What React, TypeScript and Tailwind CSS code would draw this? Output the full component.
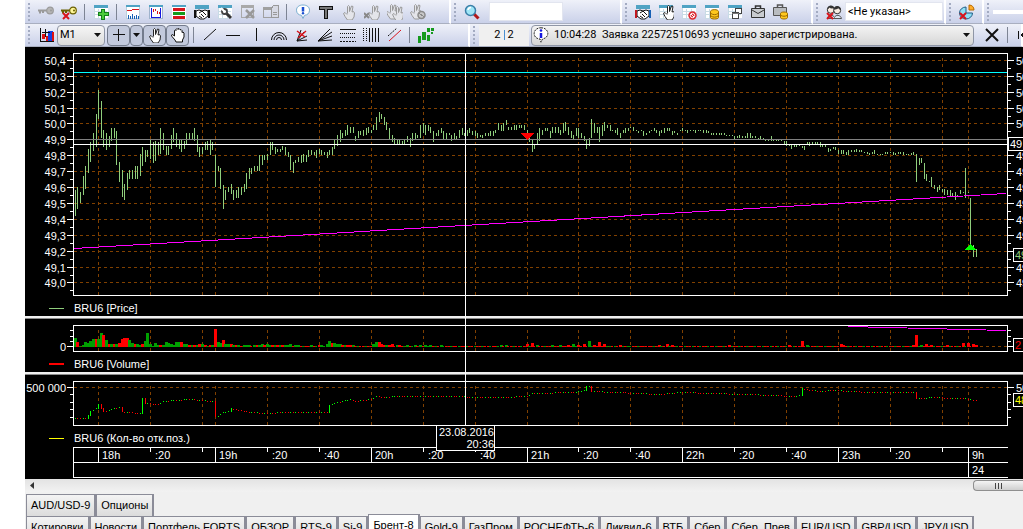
import React, { useState } from 'react';
import clsx from 'clsx';

// One entry per minute: high, low (in plot pixels)
const PRICE_BARS: number[] = [
  137, 163, 134, 156, 139, 150, 123, 142, 113, 136, 96, 120, 89, 109, 80, 98, 61, 94, 37, 66,
  48, 85, 77, 94, 80, 97, 83, 94, 75, 88, 75, 85, 78, 112, 109, 129, 117, 144, 131, 147,
  120, 137, 117, 126, 117, 126, 113, 126, 113, 126, 101, 123, 94, 113, 97, 109, 97, 104, 86, 106,
  89, 110, 88, 108, 89, 102, 75, 101, 80, 97, 93, 102, 93, 102, 82, 96, 75, 89, 80, 94,
  87, 96, 87, 99, 88, 96, 80, 92, 80, 86, 80, 86, 75, 88, 82, 99, 94, 104, 94, 101,
  89, 97, 88, 97, 87, 102, 89, 97, 102, 134, 113, 118, 115, 136, 132, 156, 137, 147, 134, 139,
  131, 141, 137, 147, 137, 145, 134, 145, 134, 142, 131, 139, 120, 136, 115, 126, 115, 121, 113, 118,
  113, 118, 102, 118, 102, 112, 102, 107, 101, 107, 89, 102, 89, 97, 94, 101, 96, 99, 96, 99,
  93, 97, 94, 102, 99, 104, 102, 117, 109, 120, 107, 110, 104, 109, 102, 110, 101, 109, 102, 109,
  97, 104, 97, 102, 99, 102, 97, 105, 96, 101, 97, 102, 99, 102, 99, 105, 97, 102, 94, 102,
  86, 96, 82, 93, 77, 89, 80, 85, 77, 83, 72, 82, 74, 80, 74, 80, 83, 88, 78, 85,
  78, 82, 77, 83, 75, 82, 74, 80, 77, 80, 72, 77, 64, 77, 59, 69, 61, 66, 64, 72,
  69, 77, 75, 86, 82, 89, 85, 91, 87, 91, 87, 91, 88, 91, 87, 91, 83, 89, 85, 94,
  80, 88, 80, 86, 82, 85, 72, 85, 70, 80, 72, 82, 72, 78, 74, 80, 78, 89, 80, 83,
  77, 83, 75, 80, 78, 86, 80, 86, 80, 82, 82, 88, 80, 86, 83, 86, 77, 85, 75, 82,
  80, 83, 77, 83, 75, 80, 78, 82, 78, 83, 80, 85, 82, 84, 82, 85, 80, 83, 80, 83,
  78, 83, 78, 83, 77, 80, 70, 77, 72, 78, 70, 78, 67, 72, 74, 77, 74, 77, 72, 77,
  72, 77, 72, 75, 72, 75, 72, 77, 77, 87, 82, 89, 86, 99, 91, 96, 80, 92, 75, 88,
  77, 82, 75, 78, 75, 78, 78, 85, 74, 80, 74, 80, 74, 80, 77, 82, 70, 80, 69, 78,
  74, 82, 78, 85, 82, 86, 75, 83, 75, 85, 80, 85, 83, 88, 87, 96, 85, 93, 66, 85,
  70, 80, 74, 80, 74, 89, 72, 83, 69, 78, 72, 75, 72, 78, 77, 78, 77, 80, 75, 82,
  80, 85, 77, 80, 75, 80, 75, 78, 74, 75, 74, 78, 77, 78, 78, 80, 77, 78, 78, 83,
  80, 82, 78, 80, 77, 78, 75, 78, 77, 80, 78, 83, 77, 80, 75, 80, 75, 78, 75, 78,
  78, 82, 78, 80, 80, 82, 77, 78, 75, 78, 77, 78, 77, 80, 77, 78, 77, 78, 77, 80,
  77, 78, 77, 78, 77, 80, 77, 80, 78, 80, 80, 82, 80, 82, 80, 82, 80, 82, 80, 82,
  80, 82, 82, 83, 82, 83, 82, 83, 83, 86, 83, 85, 82, 85, 83, 85, 83, 85, 80, 85,
  80, 85, 83, 85, 83, 85, 85, 86, 83, 86, 85, 86, 86, 88, 86, 88, 83, 88, 86, 88,
  86, 88, 86, 88, 87, 88, 88, 91, 88, 93, 91, 93, 92, 96, 92, 94, 92, 94, 92, 93,
  93, 95, 93, 97, 89, 92, 89, 93, 89, 91, 89, 91, 89, 91, 89, 94, 92, 94, 92, 94,
  95, 99, 96, 98, 94, 96, 94, 97, 97, 101, 97, 101, 97, 101, 99, 102, 97, 102, 97, 99,
  97, 99, 96, 99, 97, 99, 97, 99, 99, 100, 99, 101, 100, 102, 99, 101, 97, 101, 101, 102,
  101, 102, 101, 102, 99, 101, 99, 101, 99, 100, 99, 102, 100, 102, 99, 101, 99, 101, 99, 102,
  101, 102, 101, 102, 100, 102, 99, 102, 101, 129, 105, 112, 105, 110, 110, 126, 121, 128, 128, 129,
  124, 134, 132, 136, 134, 139, 132, 137, 136, 139, 136, 142, 137, 142, 137, 143, 140, 144, 139, 147,
  142, 144, 137, 141, 139, 140, 115, 145, 139, 140, 145, 192, 192, 204, 196, 204,
];

// Volume: positive is a rising minute, negative a falling one
const VOLUME_OPEN: number[] = [
  9, -5, 1, 2, 5, 4, 6, 8, -8, 8, 14, -12, 7, -3, 3, -3, 3, -4, -8, -9,
  -9, 7, 4, -3, 3, 2, -3, 6, 14, 3, 1, 4, 2, -2, 2, 5, 4, 3, 2, 5,
  5, -5, 3, 3, -2, 2, -2, 2, -3, 3, -2, 1, -2, 2, -18, 5, 4, -7, 3, 3,
  -3, 2, -2, 2, -1, 2, 2, 2, -1, 2, -2, 2, 3, -2, 3, 2, -2, 2, -2, 2,
  -2, 2, 2, 3, -1, 2, 2, -1, 1, -1, -1, 2, -1, 1, -2, 2, 1, 3, 6, -4,
  4, 3, 3, -2, 2, -2, -2, 2,
];
const VOLUME_PEAKS: Record<number, number> = {
  115: 3, 116: 5, 117: -5, 118: -3, 119: -2, 120: 2, 121: -2, 122: -3, 124: 2, 125: -2, 128: 2, 131: 2, 133: 2,
  135: 2, 137: 2, 141: 2, 164: 2, 166: 2, 170: -1, 174: -3, 176: -4, 178: 2, 181: 1, 184: 2, 187: 2, 190: -2,
  192: 3, 194: -2, 196: -3, 198: 6, 200: -2, 202: -5, 204: -3, 206: 1, 210: -2, 213: 1, 220: -1, 225: -2, 228: -3,
  230: -2, 252: -2, 267: -1, 275: -2, 280: -6, 282: 2, 295: -3, 296: -2, 323: -2, 324: -12, 326: 2, 328: -3,
  330: -2, 333: -1, 336: -2, 339: -1, 342: -4, 344: -4, 346: -3, 347: -2,
};

// Open interest key points: minute, level
const OPEN_INTEREST: [number, number][] = [
  [0, 37], [4, 37], [5, 34], [6, 30], [8, 27], [9, 23], [10, 27], [11, 30], [13, 29], [15, 27], [17, 26],
  [18, 30], [20, 31], [25, 32], [26, 17], [27, 22], [32, 23], [34, 20], [38, 19], [44, 18], [53, 20],
  [54, 35], [55, 35], [57, 31], [59, 30], [60, 27], [63, 29], [68, 31], [74, 32], [80, 31], [97, 31],
  [98, 24], [101, 21], [103, 20], [106, 18], [108, 20], [114, 18], [116, 15], [119, 16], [124, 15],
  [138, 15], [164, 16], [174, 15], [176, 12], [192, 11], [196, 9], [197, 5], [198, 5], [199, 10], [209, 11],
  [225, 13], [234, 11], [246, 12], [269, 14], [277, 15], [279, 14], [280, 7], [281, 8], [287, 10], [292, 9],
  [306, 11], [323, 11], [324, 17], [325, 17], [332, 16], [337, 17], [343, 17], [346, 19], [347, 19],
];

const PLOT_WIDTH = 935;
const MINUTE = 2.596;
const xOf = (minute: number) => Math.floor(2.3 + minute * MINUTE);

const TIME_CELLS = [
  { width: 25, label: '', hour: true },
  { width: 52, label: '18h', hour: true },
  { width: 52, label: ':20', hour: false },
  { width: 13, label: '', hour: false },
  { width: 52, label: '19h', hour: true },
  { width: 52, label: ':20', hour: false },
  { width: 52, label: ':40', hour: false },
  { width: 52, label: '20h', hour: true },
  { width: 52, label: ':20', hour: false },
  { width: 52, label: ':40', hour: false },
  { width: 51, label: '21h', hour: true },
  { width: 52, label: ':20', hour: false },
  { width: 52, label: ':40', hour: false },
  { width: 52, label: '22h', hour: true },
  { width: 52, label: ':20', hour: false },
  { width: 52, label: ':40', hour: false },
  { width: 52, label: '23h', hour: true },
  { width: 52, label: ':20', hour: false },
  { width: 26, label: '', hour: false },
  { width: 40, label: '9h', hour: true },
];

const GRID_X: number[] = [];
TIME_CELLS.reduce((x, cell) => {
  if (x > 0) GRID_X.push(x);
  return x + cell.width;
}, 0);

const PRICE_LEVELS = [7, 23, 39, 55, 70, 86, 102, 118, 134, 150, 166, 182, 198, 214, 229];
const PRICE_LABELS = ['50,4', '50,3', '50,2', '50,1', '50,0', '49,9', '49,8', '49,7', '49,6', '49,5', '49,4', '49,3', '49,2', '49,1', '49,0'];
// levels whose label gives way to a price box on the right
const BOXED_LEVELS = [86, 198];

const UI_FONT = "font-['Roboto','Noto_Sans',sans-serif]";

/* ---------- toolbar icons ---------- */

const Icon = ({ children, size = 16 }: { children: React.ReactNode; size?: number }) => (
  <svg width={size} height={size} viewBox={`0 0 ${size} ${size}`} shapeRendering="crispEdges" fill="none" aria-hidden="true">
    {children}
  </svg>
);

const TableBase = () => (
  <>
    <rect x="1" y="1" width="14" height="13" fill="#fff" />
    <path d="M1.5 3v11h9M5.5 5v9M10.5 5v9M1 7.5h13M1 10.5h13" stroke="#c9dbe5" />
    <rect x="1" y="1" width="14" height="3" fill="#4fa3c4" />
  </>
);

const HandShape = ({ fill = '#fff', stroke = '#222' }: { fill?: string; stroke?: string }) => (
  <path
    d="M6.5 9.500V2.500l1-1 1 1V7.500M8.500 7.500L10.500 2l1.500.5-1 5.500 1.500-.5 1 1.500-.5 4-2 3h-4.500L4 12.500 2.500 9.500l1.500-1 2 2"
    fill={fill}
    stroke={stroke}
    shapeRendering="geometricPrecision"
  />
);

const RedX = ({ x = 0, y = 0 }: { x?: number; y?: number }) => (
  <path d={`M${x} ${y}l6 6m0-6l-6 6`} stroke="#d8141c" strokeWidth="2" shapeRendering="geometricPrecision" />
);

const KeyShape = ({ fill, stroke }: { fill: string; stroke: string }) => (
  <g shapeRendering="geometricPrecision">
    <path d="M0 6.500h9M2 7v2.500M5 7v2" stroke={stroke} strokeWidth="2" />
    <circle cx="12" cy="6.500" r="3.300" fill={fill} stroke={stroke} strokeWidth="1.200" />
    <circle cx="13" cy="6.500" r="1" fill={stroke} />
  </g>
);

const Handshake = () => (
  <g>
    <rect x="1" y="1" width="14" height="4" fill="#4fa3c4" />
    <path d="M2 7l3-1 3 1 3-1 3 1v5l-4 3H6l-4-3z" fill="#fff" stroke="#111" shapeRendering="geometricPrecision" />
    <path d="M5 9l3-2 4 4M5 12l3 2M7 10l3 3" stroke="#111" shapeRendering="geometricPrecision" />
    <path d="M1 6v8" stroke="#111" strokeWidth="2" />
    <path d="M15 6v8" stroke="#111" strokeWidth="2" />
  </g>
);

const ICONS: Record<string, React.ReactNode> = {
  key: <KeyShape fill="#b5b5b5" stroke="#9a9a9a" />,
  keyRemove: <><KeyShape fill="#fff799" stroke="#6a6000" /><RedX x={2} y={9} /></>,
  tableAdd: <><TableBase /><path d="M8.500 5.500h3v3h4v3h-4v4h-3v-4h-3v-3h3z" fill="#4ccb3c" stroke="#13801a" /></>,
  areaChart: (
    <>
      <rect x="1.500" y="1.500" width="13" height="13" fill="#fff" stroke="#b9cfdc" />
      <rect x="1" y="1" width="14" height="2" fill="#4fa3c4" />
      <path d="M2 7l2-1 2 1 2-2 2 1 2-1 2 1" stroke="#d8141c" />
      <path d="M3.500 15v-4M5.500 15v-3M7.500 15v-5M9.500 15v-3M11.500 15v-4M13.500 15v-3" stroke="#1560b5" />
    </>
  ),
  frameChart: (
    <>
      <rect x="1.500" y="2.500" width="13" height="12" fill="#fff" stroke="#9fb3cc" />
      <rect x="1" y="1" width="14" height="2" fill="#4fa3c4" />
      <path d="M3.500 4v9h9V4" stroke="#1518e0" />
      <path d="M5.500 5v3M7.500 5v2M9.500 7v3M11.500 8v2" stroke="#d8141c" />
    </>
  ),
  book: (
    <>
      <rect x="1" y="1" width="14" height="14" fill="#fff" />
      <rect x="1" y="1" width="14" height="2" fill="#4fa3c4" />
      <path d="M2 5.500h12M2 13.500h12" stroke="#d8141c" strokeWidth="3" />
      <path d="M2 9.500h12" stroke="#159a1d" strokeWidth="3" />
    </>
  ),
  deals: <Handshake />,
  dealsColored: <><Handshake /><path d="M1 6v8" stroke="#c01820" strokeWidth="2" /><path d="M15 6v8" stroke="#1560b5" strokeWidth="2" /></>,
  tableTools: (
    <>
      <TableBase />
      <g shapeRendering="geometricPrecision">
        <path d="M9 9l5 5" stroke="#333" strokeWidth="3" />
        <circle cx="7.500" cy="7.500" r="2.500" fill="#fff" stroke="#444" strokeWidth="1.800" />
        <path d="M4 4l3 3" stroke="#fff" strokeWidth="2" />
      </g>
    </>
  ),
  tableRemoveOff: <><rect x="1.500" y="2.500" width="12" height="11" stroke="#a9a9a9" /><rect x="1" y="1" width="13" height="3" fill="#a9a9a9" /><path d="M6 6l8 8m0-8l-8 8" stroke="#999" strokeWidth="2.500" shapeRendering="geometricPrecision" /></>,
  tableDocOff: <><rect x="0.500" y="4.500" width="10" height="9" stroke="#a0a0a0" /><rect x="0" y="3" width="10" height="3" fill="#a0a0a0" /><path d="M8.500 4l2-2.500h5v12h-7z" fill="#d8dae4" stroke="#999" /><path d="M10 8.500h4M10 10.500h4" stroke="#999" /></>,
  info: <g shapeRendering="geometricPrecision"><path d="M8 1c4 0 6.500 2 6.500 5.200 0 3-2 4.800-5 5.100L8 14.500l-1.500-3.200c-3-.3-5-2-5-5.100C1.500 3 4 1 8 1z" fill="#fff" stroke="#7aaed0" /><path d="M8 3v4.500" stroke="#1a4fd0" strokeWidth="2.500" /><circle cx="8" cy="9.300" r="1.200" fill="#1a4fd0" /></g>,
  text: <path d="M1.500 2.500h13v3h-5v9h-3v-9h-5z" fill="#777" stroke="#111" />,
  handOff: <HandShape fill="#e4e5ea" stroke="#9a9a9a" />,
  handRemoveOff: <><g transform="translate(2 0)"><HandShape fill="#e4e5ea" stroke="#9a9a9a" /></g><path d="M0 9l5 5m0-5l-5 5" stroke="#888" strokeWidth="2" shapeRendering="geometricPrecision" /></>,
  handsOff: <><g transform="translate(-3 -1)"><HandShape fill="#e4e5ea" stroke="#9a9a9a" /></g><g transform="translate(3 1)"><HandShape fill="#e4e5ea" stroke="#9a9a9a" /></g></>,
  handStopOff: <><g transform="translate(-2 -1)"><HandShape fill="#e4e5ea" stroke="#9a9a9a" /></g><circle cx="11.500" cy="11" r="3.500" fill="#c8c8c8" stroke="#8a8a8a" strokeWidth="1.500" shapeRendering="geometricPrecision" /><path d="M9 9l5 4" stroke="#8a8a8a" /></>,
  search: <g shapeRendering="geometricPrecision"><path d="M10 10l4.500 4.500" stroke="#b01818" strokeWidth="3" /><circle cx="6.500" cy="6.500" r="5" fill="#9fe6f7" stroke="#3a7fa8" strokeWidth="1.500" /><path d="M4 6a3 3 0 0 1 3-2.500" stroke="#fff" strokeWidth="1.500" /></g>,
  tableHand: <><TableBase /><g transform="translate(3 0)"><HandShape /></g></>,
  tableStop: <><TableBase /><g shapeRendering="geometricPrecision"><circle cx="11.500" cy="11.500" r="4.200" fill="#dd2c33" /><circle cx="11.500" cy="11.500" r="2.200" stroke="#fff" /><path d="M10 10l3 3" stroke="#fff" /></g></>,
  tableCoins: <><TableBase /><g shapeRendering="geometricPrecision"><path d="M6.500 7.500c0-2.500 8-2.500 8 0v6c0 2-8 2-8 0z" fill="#ffc81e" stroke="#9c6a00" /><path d="M7 9.500c2 1.500 5 1.500 7 0M7 12c2 1.500 5 1.500 7 0" stroke="#9c6a00" /></g></>,
  tableCopy: <><TableBase /><path d="M8.500 4.500h6v5h-6zM5.500 8.500h6v6h-6z" fill="#fff" stroke="#444" /><path d="M5 9h7" stroke="#777" /></>,
  briefcase: <g shapeRendering="geometricPrecision"><path d="M5.500 4V2h5v2" stroke="#333" strokeWidth="1.500" /><path d="M1.500 4.500h13v9h-13z" fill="#c9ccd0" stroke="#333" /><path d="M2 6l6 3.500L14 6" stroke="#333" /></g>,
  briefcaseCoins: <g shapeRendering="geometricPrecision"><path d="M4.500 3V1h5v2" stroke="#555" strokeWidth="1.500" /><path d="M.5 3.500h13v8H.5z" fill="#b9bcc0" stroke="#555" /><path d="M7.500 9.500c0-2 7-2 7 0v4c0 2-7 2-7 0z" fill="#ffc81e" stroke="#9c6a00" /><path d="M8 11.500c2 1 4 1 6 0" stroke="#9c6a00" /></g>,
  clients: (
    <g shapeRendering="geometricPrecision">
      <path d="M1.500 14.500c0-4 6-4 7-1 1-3 6-3 7 1z" fill="#dfe6f2" stroke="#555" />
      <circle cx="4.800" cy="5.800" r="3.500" fill="#f8ece2" stroke="#333" />
      <circle cx="11.200" cy="6.300" r="3.500" fill="#f8ece2" stroke="#333" />
      <path d="M1.300 5.500c0-5 6.500-5 7-1.500-2 .8-4 .5-5-.5-.5 1-1 1.500-2 2zM8 5.500C8 .5 15 1 15 6c-1 0-2-.8-2.500-1.700-1 .8-3 1.200-4.500 1.200z" fill="#333" />
      <RedX x={1} y={9} />
    </g>
  ),
  pie: <g shapeRendering="geometricPrecision"><path d="M7 3v6h6.500A6.500 6 0 1 1 7 3z" fill="#8fe0f5" stroke="#1e5d86" /><path d="M10 1c3 0 5 2 5 5h-5z" fill="#ffae2e" stroke="#b86a00" /><RedX x={1} y={9} /></g>,
  barChart: (
    <>
      <path d="M2.500 1v13.500H16" stroke="#111" />
      <path d="M5.500 12V7" stroke="#e01010" strokeWidth="3" />
      <path d="M12.500 14V4" stroke="#1540e0" strokeWidth="5" />
      <path d="M14.500 14V5M8.500 14V9" stroke="#e01010" strokeWidth="2" />
      <path d="M7.500 2v8M4 5.500h8" stroke="#111" />
    </>
  ),
  plus: <path d="M7.500 2v12M2 7.500h12" stroke="#111" />,
  hand: <HandShape />,
  palm: <path d="M5 13L2 9.500 1.500 8l1-.5 2 1.500V3.500l1-.5.5.5V2.500l1-1 1 1V2l1-.5 1 1V3l1-.5 1 1v2l1-.5 1 1V10l-1.500 3v2H6z" fill="#fff" stroke="#111" shapeRendering="geometricPrecision" />,
  diagonal: <path d="M2 13L14 2" stroke="#111" shapeRendering="geometricPrecision" />,
  horizontal: <path d="M1 8.500h14" stroke="#111" />,
  vertical: <path d="M8.500 1v13" stroke="#111" />,
  arcs: <g stroke="#111" shapeRendering="geometricPrecision"><path d="M.5 13a7.500 7.500 0 0 1 15 0M3 13a5 5 0 0 1 10 0M5.500 13a2.500 2.500 0 0 1 5 0" /></g>,
  fanRed: <g shapeRendering="geometricPrecision"><path d="M3 14L7 3M3 14l7-9M3 14l10-5M3 14l10-1" stroke="#111" /><path d="M3 4l8 6M4 11l8-7" stroke="#d8141c" strokeWidth="1.500" /></g>,
  fan: <path d="M1 14L13 2M1 14L15 5M1 14l14-5M1 14l14-1" stroke="#111" shapeRendering="geometricPrecision" />,
  levels: <g stroke="#111"><path d="M0 2.500h16" /><path d="M0 6.500h16M0 10.500h16" strokeDasharray="1 1" /><path d="M0 14.500h16" strokeDasharray="2 1" /></g>,
  periods: <g stroke="#111"><path d="M.5 1v14M3.500 1v14" strokeDasharray="1 1" /><path d="M6.500 1v14M9.500 1v14M12.500 1v14M15.500 1v14" /></g>,
  channel: <g shapeRendering="geometricPrecision"><path d="M2 9l9-8" stroke="#111" strokeDasharray="2 1" /><path d="M3 14L15 3" stroke="#d8141c" /></g>,
  candles: <g fill="#159a1d"><path d="M0 9h3v7H0zM4 5h4v8H4zM9 8h3v6H9zM9 1h3v4H9zM13 1h3v3h-3zM13 5h2v2h-2z" /></g>,
  close: <path d="M2 2l12 12M14 2L2 14" stroke="#111" strokeWidth="2" shapeRendering="geometricPrecision" />,
  first: <path d="M2 4v8M10 4v8L5 8z" stroke="#111" fill="#111" />,
  bubble: <g shapeRendering="geometricPrecision"><path d="M8 .8c4 0 6.800 2.300 6.800 5.700 0 3-2.300 5-5.300 5.400L8 15.200 7 12C3.500 11.800 1.200 9.700 1.200 6.500 1.200 3.100 4 .8 8 .8z" fill="#fff" stroke="#222" strokeDasharray="2 1" /><path d="M8 6v5" stroke="#1518e0" strokeWidth="2.500" /><circle cx="8" cy="3.500" r="1.300" fill="#1518e0" /></g>,
};

const ToolButton = ({ icon, label, pressed }: { icon: string; label: string; pressed?: boolean }) => (
  <button
    type="button"
    aria-label={label}
    className={clsx(
      'flex h-[21px] w-[23px] shrink-0 items-center justify-center',
      pressed && 'rounded border border-[#737b8c] bg-[#c3cadd]'
    )}
  >
    <Icon>{ICONS[icon]}</Icon>
  </button>
);

const Separator = () => <span className="mx-1 h-4 w-px shrink-0 bg-[#7d8494]" />;

const Bar = ({ children, className }: { children: React.ReactNode; className?: string }) => (
  <div
    className={clsx(
      'flex h-full shrink-0 items-center border-r-2 border-b border-r-white border-b-[#a9afc0] bg-linear-to-b from-[#eff1f9] to-[#cad1e9] pl-[3px]',
      className
    )}
  >
    <span className="mr-1 h-[18px] w-0 shrink-0 border-l-2 border-dotted border-[#a3abc2]" />
    {children}
  </div>
);

const Caret = () => (
  <svg width="7" height="4" viewBox="0 0 7 4" aria-hidden="true">
    <path d="M0 0h7L3.500 4z" fill="#111" />
  </svg>
);

/* ---------- chart pieces ---------- */

type AxisProps = {
  majors: number[];
  minors: number[];
  labels: string[];
  height: string;
};

const LeftAxis = ({ majors, minors, labels, height }: AxisProps) => (
  <svg className={clsx('w-12 shrink-0 overflow-visible', height)} shapeRendering="crispEdges">
    {majors.map((y) => <path key={y} d={`M42 ${y + 0.5}h6`} stroke="#fff" />)}
    {minors.map((y) => <path key={y} d={`M45 ${y + 0.5}h3`} stroke="#fff" />)}
    {labels.map((label, i) => (
      <text key={label} x="41" y={majors[i] + 5} textAnchor="end" fill="#fff" className="text-[11px]">{label}</text>
    ))}
  </svg>
);

type RightAxisProps = AxisProps & { boxes: { x: number; y: number; text: string; color: string }[] };

const RightAxis = ({ majors, minors, labels, boxes, height }: RightAxisProps) => (
  <svg className={clsx('w-[15px] shrink-0 overflow-visible', height)} shapeRendering="crispEdges">
    {majors.map((y) => <path key={y} d={`M0 ${y + 0.5}h6`} stroke="#fff" />)}
    {minors.map((y) => <path key={y} d={`M0 ${y + 0.5}h3`} stroke="#fff" />)}
    {labels.map((label, i) => !BOXED_LEVELS.includes(majors[i]) && (
      <text key={label} x="8" y={majors[i] + 5} fill="#fff" className="text-[11px]">{label}</text>
    ))}
    {boxes.map((box) => (
      <g key={box.y}>
        <rect x={box.x + 0.5} y={box.y + 0.5} width="40" height="13" fill="#000" stroke="#fff" />
        <text x={box.x + 2} y={box.y + 11} fill={box.color} className="text-[11px]">{box.text}</text>
      </g>
    ))}
  </svg>
);

const Plot = ({ height, className, levels, children }: {
  height: number;
  className: string;
  levels: number[];
  children: React.ReactNode;
}) => (
  <svg
    className={clsx('min-w-0 flex-1', className)}
    viewBox={`0 0 ${PLOT_WIDTH} ${height}`}
    preserveAspectRatio="none"
    shapeRendering="crispEdges"
    fill="none"
  >
    <g stroke="#804000" strokeDasharray="3 3">
      {levels.map((y) => <path key={y} d={`M1 ${y + 0.5}H${PLOT_WIDTH - 1}`} />)}
      {GRID_X.map((x) => <path key={x} d={`M${x + 0.5} 5V${height}`} />)}
    </g>
    {children}
    <rect x="0.5" y="0.5" width={PLOT_WIDTH - 1} height={height - 1} stroke="#fff" />
  </svg>
);

const Legend = ({ text, swatch, className }: { text: string; swatch: string; className?: string }) => (
  <div className={clsx('flex h-5 items-center pt-1 pl-6', className)}>
    <span className={clsx('w-[15px]', swatch)} />
    <span className="ml-2.5 text-[11px] leading-4 text-white">{text}</span>
  </div>
);

const Divider = () => <div className="h-[3px] border-b border-[#8c8c8c] bg-[#f0f0f0]" />;

const PriceSeries = () => (
  <>
    <path
      stroke="#8fce7c"
      d={Array.from(
        { length: PRICE_BARS.length / 2 },
        (_, i) => `M${xOf(i) + 0.5} ${PRICE_BARS[i * 2]}V${PRICE_BARS[i * 2 + 1]}`
      ).join('')}
    />
    <path d="M1 19.500H934" stroke="#00ffff" />
    <path d="M1 86.500H934" stroke="#808080" />
    <path d="M1 91.500H934" stroke="#fff" />
    <path d="M1 195.500L933 140.500" stroke="#ff00ff" />
    <path d="M448 80h13l-6.500 7z" fill="#ff0000" />
    <path d="M897.500 191l6.500 6h-13z" fill="#00ff00" />
  </>
);

const VolumeSeries = () => (
  <>
    {Array.from({ length: 348 }, (_, i) => {
      const value = VOLUME_OPEN[i] ?? VOLUME_PEAKS[i] ?? (i % 3 === 1 ? 1 : -1);
      const size = Math.abs(value);
      return (
        <rect
          key={i}
          x={xOf(i) - 1}
          y={22 - size}
          width={size > 1 ? 3 : 2}
          height={size}
          fill={value > 0 ? '#00a000' : '#ff0000'}
        />
      );
    })}
    <path d="M775 1.500L933 5.500" stroke="#ff00ff" />
  </>
);

const InterestSeries = () => {
  const marks: React.ReactNode[] = [];
  let previous = OPEN_INTEREST[0][1];
  for (let k = 0; k < OPEN_INTEREST.length; k++) {
    const [start, y0] = OPEN_INTEREST[k];
    const [end, y1] = OPEN_INTEREST[k + 1] ?? [start + 1, y0];
    for (let i = start; i < end; i++) {
      const y = Math.round(y0 + ((y1 - y0) * (i - start)) / (end - start));
      const jump = Math.abs(y - previous);
      const rising = y < previous || (y === previous && (i * 7) % 5 < 2);
      marks.push(
        <rect
          key={i}
          x={xOf(i)}
          y={jump > 2 ? Math.min(y, previous) : y}
          width="1"
          height={jump > 2 ? jump + 1 : 1}
          fill={rising ? '#00ff00' : '#ff0000'}
        />
      );
      previous = y;
    }
  }
  return <>{marks}</>;
};

const Crosshair = () => (
  <div className="pointer-events-none absolute top-1.5 bottom-[28px] left-12 right-[15px]">
    <div
      className="absolute inset-y-0 -ml-[29px] flex w-[59px] flex-col items-center"
      style={{ left: `${(392 / PLOT_WIDTH) * 100}%` }}
    >
      <span className="w-px flex-1 bg-white" />
      <span className="w-full border border-white bg-black text-right text-[11px] leading-3 text-white">
        23.08.2016
        <br />
        20:36
      </span>
    </div>
  </div>
);

const TimeAxis = () => (
  <div className="mr-[15px] ml-12 border-b border-white">
    <div className="flex h-4 border-y border-white">
      {TIME_CELLS.map((cell, i) => (
        <div key={i} className="flex min-w-0 basis-0 text-[11px] leading-[14px] whitespace-nowrap text-white" style={{ flexGrow: cell.width }}>
          <span className={clsx('w-px shrink-0 bg-white', cell.hour ? 'h-full' : 'h-1')} />
          <span className={cell.hour ? 'pl-[3px]' : 'pl-1'}>{cell.label}</span>
        </div>
      ))}
    </div>
    <div className="flex h-[14px] text-[11px] leading-[14px] text-white">
      <div className="min-w-0 basis-0" style={{ flexGrow: 895 }}>
        <span className="block h-full w-px bg-white" />
      </div>
      <div className="flex min-w-0 basis-0" style={{ flexGrow: 40 }}>
        <span className="w-px bg-white" />
        <span className="pl-[3px]">24</span>
      </div>
    </div>
  </div>
);

/* ---------- page tabs ---------- */

const UPPER_TABS = ['AUD/USD-9', 'Опционы'];
const LOWER_TABS = [
  'Котировки', 'Новости', 'Портфель FORTS', 'ОБЗОР', 'RTS-9', 'Si-9', 'Брент-8', 'Gold-9', 'ГазПром',
  'РОСНЕФТЬ-6', 'Ликвид-6', 'ВТБ', 'Сбер', 'Сбер_Прев', 'EUR/USD', 'GBP/USD', 'JPY/USD',
];

const Tab = ({ name, active, onSelect }: { name: string; active: boolean; onSelect: (name: string) => void }) => (
  <button
    type="button"
    onClick={() => onSelect(name)}
    className={clsx(
      'shrink-0 border-r-2 border-t border-l border-[#8b8c98] px-1 text-[11px] leading-[21px] whitespace-nowrap text-black',
      active ? '-mt-0.5 bg-white pb-0.5' : 'bg-linear-to-b from-[#f4f4f4] to-[#dcdcdc]'
    )}
  >
    {name}
  </button>
);

const App: React.FC = () => {
  const [activeTab, setActiveTab] = useState('Брент-8');
  const [query, setQuery] = useState('');

  return (
    <div className="h-screen overflow-hidden bg-white pl-[25px] font-['Liberation_Sans',Arial,sans-serif]">
      <div className="flex h-full flex-col bg-[#f0f0f0]">
        {/* Toolbars */}
        <div className="flex h-6 shrink-0 overflow-hidden">
          <Bar className="w-[426px]">
            <ToolButton icon="key" label="Connect" />
            <ToolButton icon="keyRemove" label="Disconnect" />
            <Separator />
            <ToolButton icon="tableAdd" label="New table" />
            <Separator />
            <ToolButton icon="areaChart" label="Quotes" />
            <ToolButton icon="frameChart" label="Chart" />
            <ToolButton icon="book" label="Order book" />
            <ToolButton icon="deals" label="Deals" />
            <ToolButton icon="tableTools" label="Table settings" />
            <ToolButton icon="tableRemoveOff" label="Remove table" />
            <ToolButton icon="tableDocOff" label="Copy table" />
            <Separator />
            <ToolButton icon="info" label="Information" />
            <ToolButton icon="text" label="Text" />
            <ToolButton icon="handOff" label="New order" />
            <ToolButton icon="handRemoveOff" label="Cancel order" />
            <ToolButton icon="handsOff" label="Linked orders" />
            <ToolButton icon="handStopOff" label="Stop order" />
          </Bar>
          <Bar className="w-[171px]">
            <ToolButton icon="search" label="Search" />
            <input
              aria-label="Search text"
              value={query}
              onChange={(e) => setQuery(e.target.value)}
              className="ml-1.5 h-[19px] w-[74px] border border-[#e2e5ef] bg-white px-1 text-[11px]"
            />
          </Bar>
          <Bar className="w-[191px]">
            <ToolButton icon="dealsColored" label="Trades" />
            <ToolButton icon="tableHand" label="Orders" />
            <ToolButton icon="tableStop" label="Stop orders" />
            <ToolButton icon="tableCoins" label="Limits" />
            <ToolButton icon="tableCopy" label="Tables" />
            <ToolButton icon="briefcase" label="Portfolio" />
            <ToolButton icon="briefcaseCoins" label="Portfolio funds" />
          </Bar>
          <Bar className="w-[133px]">
            <ToolButton icon="clients" label="Clients" />
            <input
              aria-label="Client"
              defaultValue="<Не указан>"
              className={clsx('h-[19px] w-[98px] border border-[#e2e5ef] bg-white px-0.5 text-[11px]', UI_FONT)}
            />
          </Bar>
          <Bar className="w-[38px]">
            <ToolButton icon="pie" label="Reset chart" />
          </Bar>
          <Bar className="grow">
            <span className="h-1 w-12 bg-white" />
          </Bar>
        </div>
        <div className="flex h-[23px] shrink-0 overflow-hidden">
          <Bar className="w-[445px]">
            <ToolButton icon="barChart" label="Chart type" />
            <label className="relative flex items-center">
              <select
                aria-label="Interval"
                className={clsx('h-[21px] w-[48px] appearance-none rounded-sm border border-[#8f96a6] bg-linear-to-b from-[#f6f6f6] to-[#dcdcdc] pl-0.5 text-[11px]', UI_FONT)}
              >
                <option>M1</option>
              </select>
              <span className="pointer-events-none absolute right-1"><Caret /></span>
            </label>
            <span className="ml-0.5 flex">
              <ToolButton icon="plus" label="Crosshair" pressed />
              <button type="button" aria-label="Cursor kind" className="flex h-[21px] w-[13px] items-center justify-center rounded border border-[#737b8c] bg-[#c3cadd]">
                <Caret />
              </button>
              <ToolButton icon="hand" label="Trade from chart" pressed />
              <ToolButton icon="palm" label="Drag" pressed />
            </span>
            <Separator />
            <ToolButton icon="diagonal" label="Trend line" />
            <ToolButton icon="horizontal" label="Horizontal line" />
            <ToolButton icon="vertical" label="Vertical line" />
            <ToolButton icon="arcs" label="Fibonacci arcs" />
            <ToolButton icon="fanRed" label="Gann fan" />
            <ToolButton icon="fan" label="Fibonacci fan" />
            <ToolButton icon="levels" label="Levels" />
            <ToolButton icon="periods" label="Time zones" />
            <ToolButton icon="channel" label="Channel" />
            <Separator />
            <ToolButton icon="candles" label="Indicators" />
          </Bar>
          <Bar className="min-w-0 shrink grow">
            <span className={clsx('mr-0.5 flex h-[21px] w-[50px] shrink-0 items-center justify-center gap-[3px] bg-[#f0f0f0] text-[11px]', UI_FONT)}>
              <span>2</span>
              <span className="h-2.5 w-px bg-[#4a8fd0]" />
              <span>2</span>
            </span>
            <label className="relative flex min-w-0 grow items-center">
              <span className="pointer-events-none absolute left-0.5"><Icon>{ICONS.bubble}</Icon></span>
              <select
                aria-label="Messages"
                className={clsx('h-[21px] w-full appearance-none rounded-sm border border-[#8f96a6] bg-linear-to-b from-[#f4f4f4] to-[#d6d6d6] pl-[22px] text-[11px]', UI_FONT)}
              >
                <option>{'10:04:28\u00a0 Заявка 22572510693 успешно зарегистрирована.'}</option>
              </select>
              <span className="pointer-events-none absolute right-1"><Caret /></span>
            </label>
            <span className="ml-1.5"><ToolButton icon="close" label="Clear message" /></span>
            <Separator />
            <span className="-mr-3.5 flex"><ToolButton icon="first" label="First message" /></span>
          </Bar>
        </div>

        {/* Charts */}
        <div className="relative shrink-0 bg-black pb-px">
          <section aria-label="Price" className="pt-1.5">
            <div className="flex">
              <LeftAxis height="h-[243px]" majors={PRICE_LEVELS} minors={PRICE_LEVELS.map((y) => y + 8)} labels={PRICE_LABELS} />
              <Plot height={243} className="h-[243px]" levels={PRICE_LEVELS}>
                <PriceSeries />
              </Plot>
              <RightAxis
                height="h-[243px]"
                majors={PRICE_LEVELS}
                minors={PRICE_LEVELS.map((y) => y + 8)}
                labels={PRICE_LABELS}
                boxes={[
                  { x: 0, y: 84, text: '49,87', color: '#fff' },
                  { x: 5, y: 195, text: '49,17', color: '#8fce7c' },
                ]}
              />
            </div>
            <Legend text="BRU6 [Price]" swatch="h-px bg-[#8fce7c]" />
          </section>
          <Divider />
          <section aria-label="Volume" className="pt-1.5">
            <div className="flex">
              <LeftAxis height="h-[27px]" majors={[21]} minors={[5, 11, 16]} labels={['0']} />
              <Plot height={27} className="h-[27px]" levels={[21]}>
                <VolumeSeries />
              </Plot>
              <RightAxis height="h-[27px]" majors={[21]} minors={[5, 11, 16]} labels={[]} boxes={[{ x: 5, y: 13, text: '2', color: '#ff0000' }]} />
            </div>
            <Legend text="BRU6 [Volume]" swatch="h-0.5 bg-[#ff0000]" />
          </section>
          <Divider />
          <section aria-label="Open interest" className="pt-1.5">
            <div className="flex">
              <LeftAxis height="h-[45px]" majors={[6]} minors={[13, 21, 28, 36]} labels={['500 000']} />
              <Plot height={45} className="h-[45px]" levels={[6]}>
                <InterestSeries />
              </Plot>
              <RightAxis
                height="h-[45px]"
                majors={[6]}
                minors={[13, 21, 28, 36]}
                labels={['500 000']}
                boxes={[{ x: 5, y: 12, text: '482 000', color: '#ffff00' }]}
              />
            </div>
            <Legend text="BRU6 (Кол-во отк.поз.)" swatch="h-px bg-[#ffff00]" className="mb-px" />
          </section>
          <TimeAxis />
          <Crosshair />
        </div>

        {/* Scroll bar */}
        <div className="flex h-[13px] shrink-0 items-center justify-between bg-linear-to-b from-[#e3e3e3] to-[#f2f2f2]">
          <button type="button" aria-label="Scroll left" className="flex w-3.5 justify-center">
            <svg width="4" height="7" viewBox="0 0 4 7"><path d="M4 0v7L0 3.500z" fill="#333" /></svg>
          </button>
          <button
            type="button"
            aria-label="Scroll chart"
            className="flex h-[11px] w-[50px] items-center justify-center gap-0.5 rounded-l-sm border border-r-0 border-[#8f8f8f] bg-linear-to-b from-[#f4f4f4] to-[#cfcfcf]"
          >
            <span className="h-1.5 w-px bg-[#444]" />
            <span className="h-1.5 w-px bg-[#444]" />
            <span className="h-1.5 w-px bg-[#444]" />
          </button>
        </div>

        {/* Page tabs */}
        <nav className="mt-0.5 shrink-0 pl-px">
          <div className="flex">
            {UPPER_TABS.map((name) => (
              <Tab key={name} name={name} active={name === activeTab} onSelect={setActiveTab} />
            ))}
          </div>
          <div className="flex">
            {LOWER_TABS.map((name) => (
              <Tab key={name} name={name} active={name === activeTab} onSelect={setActiveTab} />
            ))}
          </div>
        </nav>
      </div>
    </div>
  );
};

export default App;
